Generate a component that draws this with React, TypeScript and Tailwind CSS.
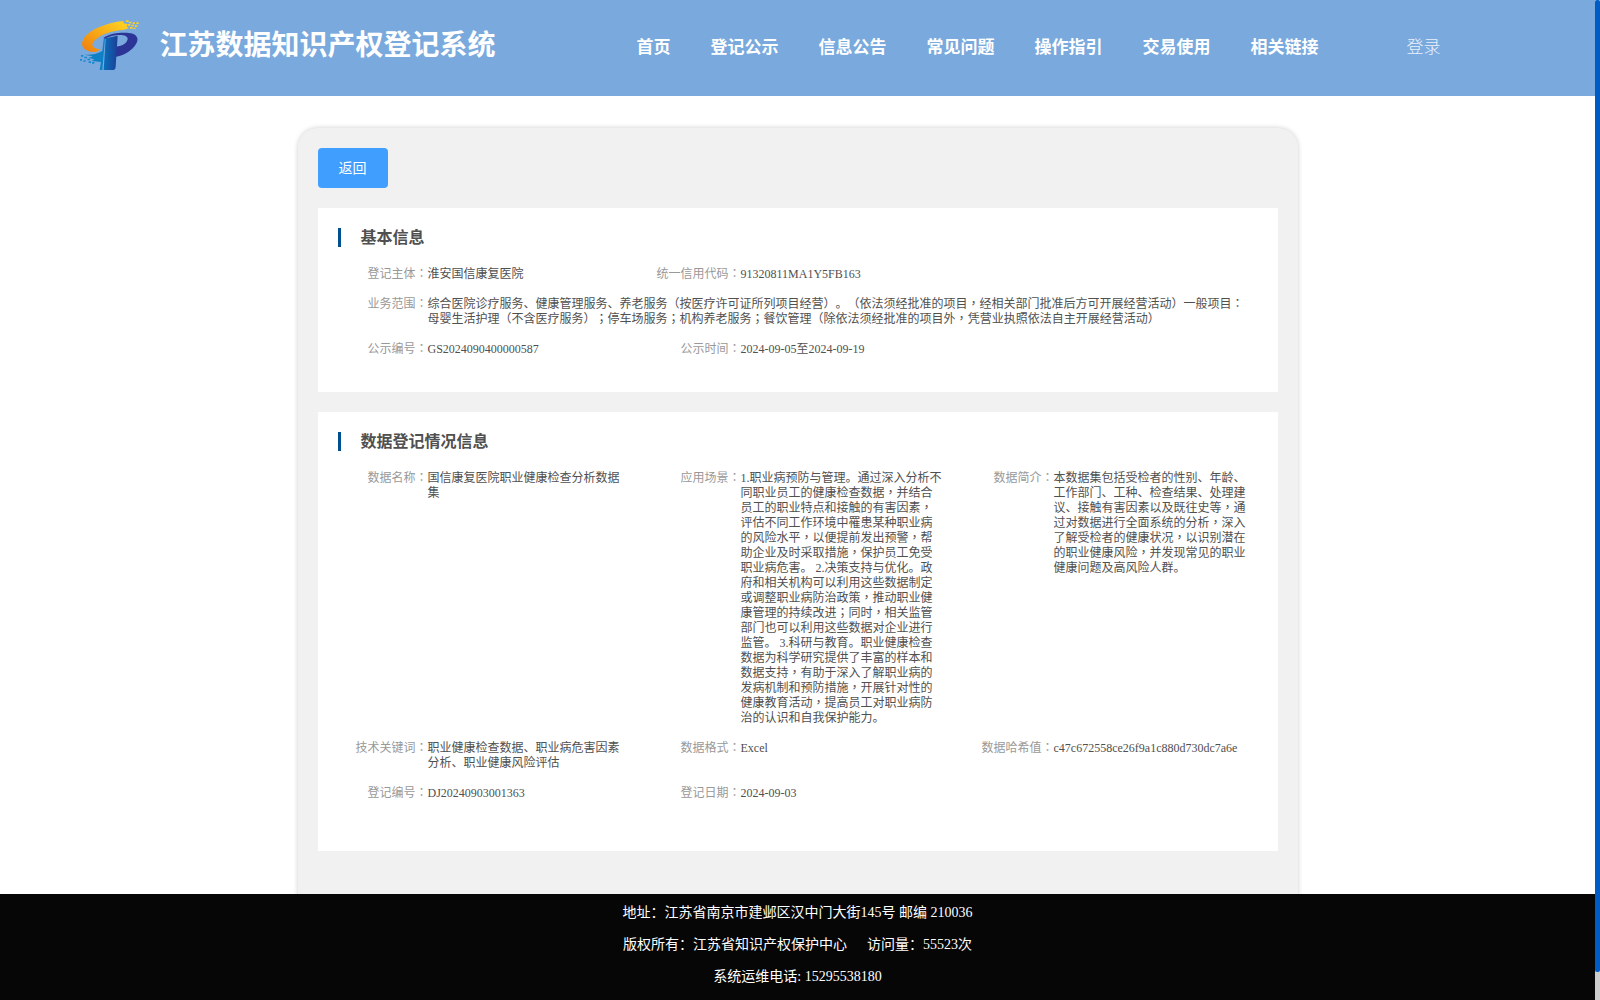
import { Fragment } from "react";

type Item = {
  label: string;
  value: string;
  wide?: boolean;
};

const navItems = ["首页", "登记公示", "信息公告", "常见问题", "操作指引", "交易使用", "相关链接"];

const basicInfo: Item[] = [
  { label: "登记主体", value: "淮安国信康复医院" },
  { label: "统一信用代码", value: "91320811MA1Y5FB163" },
  {
    label: "业务范围",
    value:
      "综合医院诊疗服务、健康管理服务、养老服务（按医疗许可证所列项目经营）。（依法须经批准的项目，经相关部门批准后方可开展经营活动）一般项目：\n母婴生活护理（不含医疗服务）；停车场服务；机构养老服务；餐饮管理（除依法须经批准的项目外，凭营业执照依法自主开展经营活动）",
    wide: true,
  },
  { label: "公示编号", value: "GS2024090400000587" },
  { label: "公示时间", value: "2024-09-05至2024-09-19" },
];

const dataInfo: Item[] = [
  { label: "数据名称", value: "国信康复医院职业健康检查分析数据\n集" },
  {
    label: "应用场景",
    value: `1.职业病预防与管理。通过深入分析不
同职业员工的健康检查数据，并结合
员工的职业特点和接触的有害因素，
评估不同工作环境中罹患某种职业病
的风险水平，以便提前发出预警，帮
助企业及时采取措施，保护员工免受
职业病危害。 2.决策支持与优化。政
府和相关机构可以利用这些数据制定
或调整职业病防治政策，推动职业健
康管理的持续改进；同时，相关监管
部门也可以利用这些数据对企业进行
监管。 3.科研与教育。职业健康检查
数据为科学研究提供了丰富的样本和
数据支持，有助于深入了解职业病的
发病机制和预防措施，开展针对性的
健康教育活动，提高员工对职业病防
治的认识和自我保护能力。`,
  },
  {
    label: "数据简介",
    value: `本数据集包括受检者的性别、年龄、
工作部门、工种、检查结果、处理建
议、接触有害因素以及既往史等，通
过对数据进行全面系统的分析，深入
了解受检者的健康状况，以识别潜在
的职业健康风险，并发现常见的职业
健康问题及高风险人群。`,
  },
  { label: "技术关键词", value: "职业健康检查数据、职业病危害因素\n分析、职业健康风险评估" },
  { label: "数据格式", value: "Excel" },
  { label: "数据哈希值", value: "c47c672558ce26f9a1c880d730dc7a6e" },
  { label: "登记编号", value: "DJ20240903001363" },
  { label: "登记日期", value: "2024-09-03" },
];

// commas and colons sit in the middle of their box
function Text({ children }: { children: string }) {
  return (
    <>
      {children.split(/([，；：])/).map((part, i) =>
        i % 2 ? (
          <span key={i} className="font-['Noto_Sans_CJK_TC',sans-serif] leading-none">
            {part}
          </span>
        ) : (
          <Fragment key={i}>{part}</Fragment>
        )
      )}
    </>
  );
}

function Logo() {
  return (
    <svg viewBox="0 0 240 210" className="w-20 h-[70px] shrink-0">
      <defs>
        <linearGradient id="orange" x1="0" y1="1" x2="1" y2="0">
          <stop offset="0" stopColor="#f07c0c" />
          <stop offset="1" stopColor="#ffd824" />
        </linearGradient>
        <linearGradient id="blue" x1="0" y1="0" x2="1" y2="0">
          <stop offset="0" stopColor="#0b6fba" />
          <stop offset="1" stopColor="#1c3f98" />
        </linearGradient>
      </defs>
      <path
        d="M160 33C112 38 61 57 42 84C27 108 43 126 78 126L92 118C66 116 60 103 76 89C96 72 128 62 160 60L176 55L170 49L173 43L161 40Z"
        fill="url(#orange)"
      />
      <path
        d="M100 84C122 69 153 67 177 69C205 72 209 90 194 108C180 126 158 137 138 140V110C158 108 173 97 173 86C172 75 153 73 139 76C124 78 111 82 105 87Z"
        fill="#2c3596"
      />
      <path d="M107 85L143 77L137 170Q137 178 131 180H101Z" fill="url(#blue)" />
      <path d="M101 88L105 86L97 180H89L93 156L65 153L73 148L56 144L68 139L43 134C66 136 83 131 97 123Z" fill="#0d80c6" />
      <path
        d="M168 31h8v5h-8zM177 35h8v5h-8zM188 37h7v5h-7zM173 42h8v5h-8zM184 44h8v5h-8zM195 46h7v5h-7zM180 51h8v5h-8zM199 37h7v5h-7zM190 53h7v4h-7z"
        fill="#f9cf2b"
      />
      <path
        d="M33 135h7v5h-7zM43 140h8v5h-8zM52 146h8v5h-8zM30 147h6v5h-6zM40 151h7v4h-7zM56 154h7v5h-7zM66 156h7v5h-7z"
        fill="#1489cf"
      />
    </svg>
  );
}

function Section({ title, items, className }: { title: string; items: Item[]; className: string }) {
  return (
    <section className={`bg-white px-5 pt-5 ${className}`}>
      <h2 className="h-[19px] pl-5 border-l-3 border-[#00508f] text-base leading-[19px] font-bold text-[#505050]">
        {title}
      </h2>
      <div className="grid grid-cols-[313px_313px_294px] gap-y-[15px] mt-5 text-xs leading-[15px]">
        {items.map((item) => (
          <div key={item.label} className={item.wide ? "col-span-3 flex" : "flex"}>
            <div className="w-[90px] shrink-0 text-right whitespace-nowrap text-[#999]">
              <Text>{item.label + "："}</Text>
            </div>
            <div className="whitespace-pre text-[#505050]">
              <Text>{item.value}</Text>
            </div>
          </div>
        ))}
      </div>
    </section>
  );
}

export default function App() {
  return (
    <div className="flex h-[1000px] w-[1600px] overflow-hidden bg-white font-['Liberation_Serif','Noto_Sans_CJK_SC',serif] [text-spacing-trim:space-all]">
      <div className="flex flex-col w-[1595px] h-full">
        {/* HEADER */}
        <header className="flex items-center h-24 shrink-0 pl-[70px] pb-1.5 bg-[#79a9dd] text-white">
          <Logo />
          <h1 className="w-[336px] mt-0.5 ml-[9.5px] text-[28px] leading-10 font-bold whitespace-nowrap">
            江苏数据知识产权登记系统
          </h1>
          <nav className="flex gap-10 ml-[141px] mt-[5px] text-[17px] leading-6 font-bold whitespace-nowrap">
            {navItems.map((item) => (
              <a key={item}>{item}</a>
            ))}
          </nav>
          <a className="ml-[88px] mt-[5px] text-[17px] leading-6 font-light text-white/85">登录</a>
        </header>

        {/* CONTENT */}
        <main className="flex-1 min-h-0 overflow-hidden pt-8">
          <div className="w-[1000px] h-[900px] mx-auto p-5 rounded-[20px] bg-[#f1f1f1] shadow-[0_0_5px_rgba(0,0,0,0.2)]">
            <button className="block w-[70px] h-10 mb-5 rounded bg-[#409eff] pt-px text-sm text-white">返回</button>
            <Section title="基本信息" items={basicInfo} className="h-[184px] mb-5" />
            <Section title="数据登记情况信息" items={dataInfo} className="h-[439px]" />
          </div>
        </main>

        {/* FOOTER */}
        <footer className="h-[106px] shrink-0 pt-[3px] bg-[#060606] text-center text-sm leading-8 text-white">
          <p>地址：江苏省南京市建邺区汉中门大街145号 邮编 210036</p>
          <p>
            版权所有：江苏省知识产权保护中心<span className="ml-5">访问量：55523次</span>
          </p>
          <p>系统运维电话: 15295538180</p>
        </footer>
      </div>

      {/* SCROLLBAR */}
      <div className="w-[5px] h-full bg-[#cdcdcd]">
        <div className="h-[972px] rounded-[2px] bg-[#005bc4]" />
      </div>
    </div>
  );
}
